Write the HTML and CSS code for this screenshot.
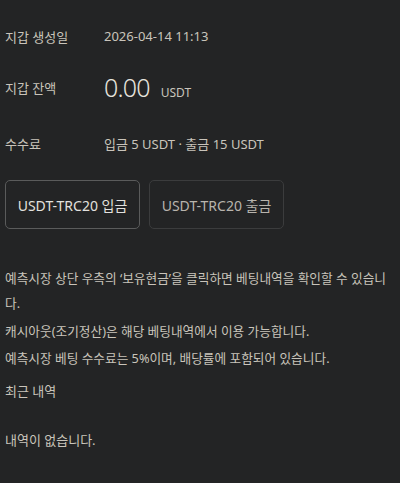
FILE: index.html
```html
<!DOCTYPE html>
<html lang="ko">
<head>
    <meta charset="UTF-8">
    <meta name="viewport" content="width=device-width, initial-scale=1.0">
    <title>지갑</title>
    <link rel="stylesheet" href="styles.css">
</head>
<body>
    <div class="wallet">
        <div class="row">
            <div class="label">지갑 생성일</div>
            <div class="value">2026-04-14 11:13</div>
        </div>
        <div class="row row-balance">
            <div class="label">지갑 잔액</div>
            <div class="value">
                <span class="amount">0.00</span>
                <span class="unit">USDT</span>
            </div>
        </div>
        <div class="row">
            <div class="label">수수료</div>
            <div class="value">입금 5 USDT · 출금 15 USDT</div>
        </div>

        <div class="actions">
            <button class="btn btn-active">USDT-TRC20 입금</button>
            <button class="btn">USDT-TRC20 출금</button>
        </div>

        <div class="notice">
            <p>예측시장 상단 우측의 ‘보유현금’을 클릭하면 베팅내역을 확인할 수 있습니다.</p>
            <p>캐시아웃(조기정산)은 해당 베팅내역에서 이용 가능합니다.</p>
            <p>예측시장 베팅 수수료는 5%이며, 배당률에 포함되어 있습니다.</p>
        </div>

        <div class="history">
            <h3>최근 내역</h3>
            <p class="empty">내역이 없습니다.</p>
        </div>
    </div>
</body>
</html>
```

FILE: styles.css
```css
/* Couleurs */
:root {
    --bg-color: #232425;
    --text-color: #c9c4bb;
    --strong-color: #e6e3dd;
    --border-color: #5a5b5b;
    --border-dim: #3b3c3d;
}

* {
    margin: 0;
    padding: 0;
    box-sizing: border-box;
}

body {
    font-family: "Noto Sans", "Noto Sans CJK KR", sans-serif;
    background: var(--bg-color);
    color: var(--text-color);
    font-size: 13px;
}

.wallet {
    padding: 26px 5px 0;
}

/* Lignes d'information */
.row {
    display: flex;
    align-items: center;
    height: 20px;
}

.row-balance {
    height: 32px;
    margin: 25px 0 30px;
}

.label {
    width: 99px;
    flex-shrink: 0;
}

.value {
    display: flex;
    align-items: baseline;
}

.amount {
    font-size: 25px;
    font-weight: 300;
    letter-spacing: -0.8px;
    color: var(--strong-color);
    margin-right: 11px;
    line-height: 32px;
}

.unit {
    font-size: 12px;
}

/* Boutons */
.actions {
    display: flex;
    gap: 9px;
    margin-top: 27px;
}

.btn {
    font-family: inherit;
    font-size: 14px;
    width: 135px;
    height: 49px;
    background: var(--bg-color);
    color: #b8b4ad;
    border: 1px solid var(--border-dim);
    border-radius: 5px;
    cursor: pointer;
}

.btn-active {
    color: #e2e1de;
    border-color: var(--border-color);
}

/* Notice */
.notice {
    margin-top: 37px;
    font-size: 12.7px;
    line-height: 25px;
    word-break: break-all;
}

.notice p {
    margin-bottom: 2.5px;
}

.history h3 {
    font-size: 13px;
    font-weight: 400;
    margin-top: 8px;
    line-height: 25px;
}

.empty {
    margin-top: 24px;
    line-height: 25px;
}
```
